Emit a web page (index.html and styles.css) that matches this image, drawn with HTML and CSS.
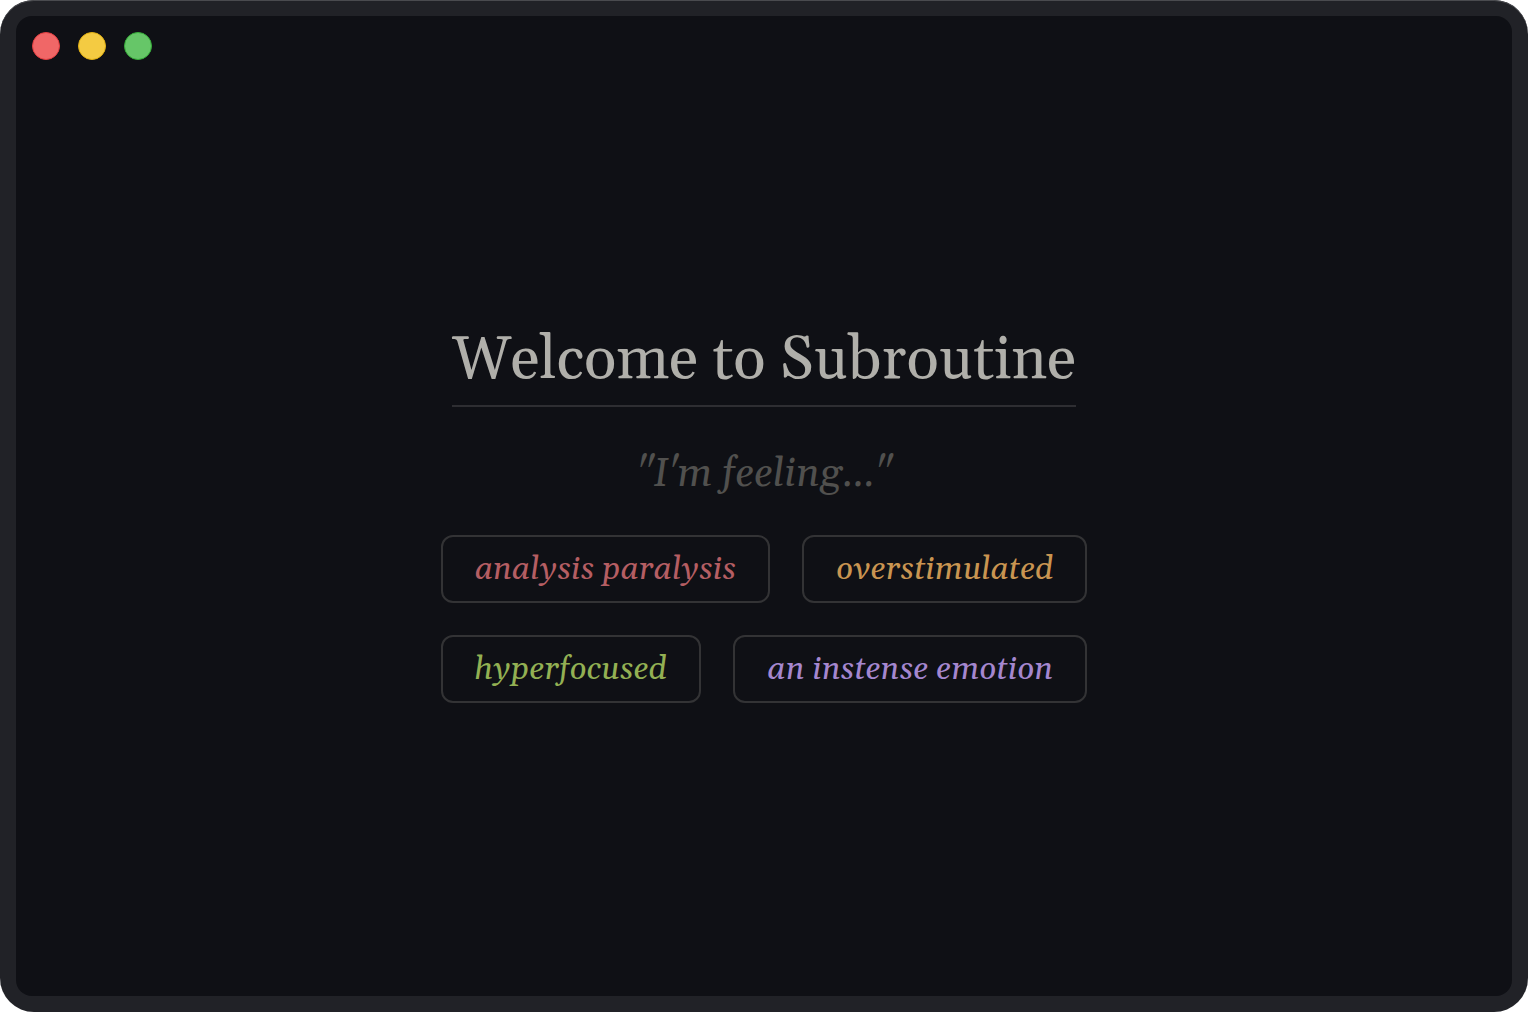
FILE: index.html
```html
<!DOCTYPE html>
<html lang="en">
<head>
    <meta charset="UTF-8">
    <meta name="viewport" content="width=device-width, initial-scale=1.0">
    <title>Subroutine</title>
    <link rel="stylesheet" href="styles.css">
</head>
<body>
    <div class="window">
        <div class="screen">
            <div class="controls">
                <button class="control close" aria-label="Close"></button>
                <button class="control minimize" aria-label="Minimize"></button>
                <button class="control zoom" aria-label="Zoom"></button>
            </div>
            <main class="welcome">
                <h1>Welcome to Subroutine</h1>
                <p class="prompt">"I'm feeling..."</p>
                <div class="feelings">
                    <div class="row">
                        <button class="feeling red">analysis paralysis</button>
                        <button class="feeling orange">overstimulated</button>
                    </div>
                    <div class="row">
                        <button class="feeling green">hyperfocused</button>
                        <button class="feeling purple">an instense emotion</button>
                    </div>
                </div>
            </main>
        </div>
    </div>
</body>
</html>
```
FILE: styles.css
```css
* {
    box-sizing: border-box;
}
body {
    margin: 0;
    background-color: #fff;
    font-family: Georgia, Gelasio, "DejaVu Serif", "Liberation Serif", serif;
}
.window {
    display: flex;
    min-height: 100vh;
    padding: 16px;
    border-radius: 34px;
    background-color: #212227;
    box-shadow: inset 0 1px 0 #4a4b4f;
}
.screen {
    display: flex;
    flex: 1;
    flex-direction: column;
    padding: 16px;
    border-radius: 16px;
    background-color: #0f1015;
}
.controls {
    display: flex;
    gap: 18px;
}
.control {
    width: 28px;
    height: 28px;
    padding: 0;
    border: 1px solid;
    border-radius: 50%;
}
.close {
    background-color: #f06767;
    border-color: #e33e41;
}
.minimize {
    background-color: #f4cb42;
    border-color: #e3b112;
}
.zoom {
    background-color: #66c668;
    border-color: #35ad38;
}
.welcome {
    display: flex;
    flex: 1;
    flex-direction: column;
    align-items: center;
    justify-content: center;
    padding-bottom: 10px;
}
h1 {
    margin: 0;
    padding-bottom: 10px;
    border-bottom: 2px solid #2e2e32;
    color: #b0afaa;
    font-size: 60px;
    font-weight: normal;
    line-height: 68px;
}
.prompt {
    margin: 44px 0 36px;
    color: #51504e;
    font-size: 40px;
    font-style: italic;
    line-height: 48px;
}
.feelings {
    display: grid;
    gap: 32px;
}
.row {
    display: flex;
    gap: 32px;
}
.feeling {
    flex: auto;
    height: 68px;
    padding: 0 32px;
    border: 2px solid #333335;
    border-radius: 12px;
    background: none;
    font-family: inherit;
    font-size: 32px;
    font-style: italic;
}
.red {
    color: #b55e63;
}
.orange {
    color: #c99551;
}
.green {
    color: #93b053;
}
.purple {
    color: #a587cf;
}
```
